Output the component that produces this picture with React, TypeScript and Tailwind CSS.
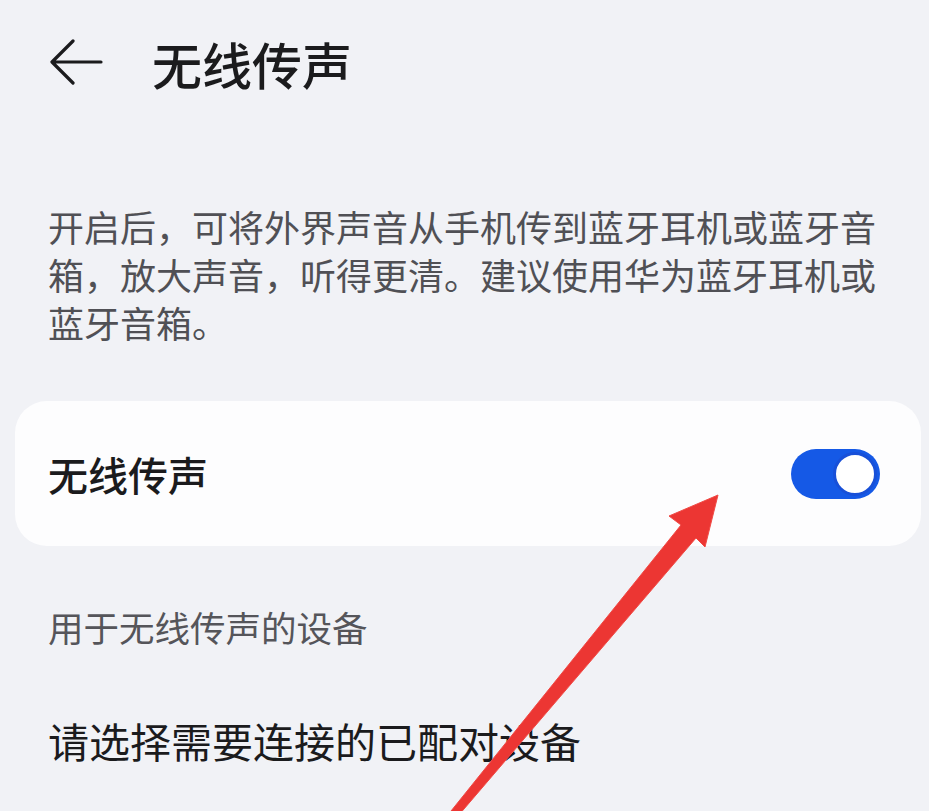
const cjk = { fontFamily: '"Noto Sans CJK SC", "Noto Sans", sans-serif' }

function BackIcon() {
  return (
    <svg width="56" height="48" viewBox="0 0 56 48" fill="none">
      <path d="M52 23H4M24 2L3 23L24 44" stroke="#1b1b1d" strokeWidth="3.2" strokeLinecap="round" strokeLinejoin="round" />
    </svg>
  )
}

function Toggle() {
  return (
    <div className="flex h-[50px] w-[89px] items-center justify-end rounded-full bg-[#1559e6] p-[3px]">
      <div className="h-[44px] w-[44px] rounded-full border-[3px] border-[#1850d8] bg-white" />
    </div>
  )
}

function RedArrow() {
  return (
    <svg className="pointer-events-none absolute left-0 top-0" width="929" height="811" viewBox="0 0 929 811">
      <polygon
        points="718,495 705,547 696,538 458,816 451,811 681,525 669,516"
        fill="#ec3633"
        stroke="#f04a45"
        strokeWidth="1"
        strokeLinejoin="round"
      />
    </svg>
  )
}

export default function App() {
  return (
    <div className="relative h-[811px] w-[929px] overflow-hidden bg-[#f1f2f6]" style={cjk}>
      <header className="flex h-[126px] items-center pl-[49px]">
        <BackIcon />
        <h1 className="ml-[47px] text-[50px] leading-[60px] font-medium text-[#1b1b1d]">无线传声</h1>
      </header>

      <p className="mt-[76px] px-[48px] text-[36px] leading-[48px] text-[#505055]">
        开启后，可将外界声音从手机传到蓝牙耳机或蓝牙音箱，放大声音，听得更清。建议使用华为蓝牙耳机或蓝牙音箱。
      </p>

      <div className="mx-[15px] mt-[55px] flex h-[145px] w-[906px] items-center justify-between rounded-[32px] bg-[#fdfdfe] pl-[33px] pr-[41px]">
        <span className="text-[40px] leading-[52px] font-medium text-[#1b1b1d]">无线传声</span>
        <Toggle />
      </div>

      <div className="mt-[57px] px-[48px] text-[35.5px] leading-[48px] text-[#55555a]">用于无线传声的设备</div>

      <div className="mt-[61px] px-[48px] text-[41px] leading-[56px] text-[#1b1b1d]">请选择需要连接的已配对设备</div>

      <RedArrow />
    </div>
  )
}
